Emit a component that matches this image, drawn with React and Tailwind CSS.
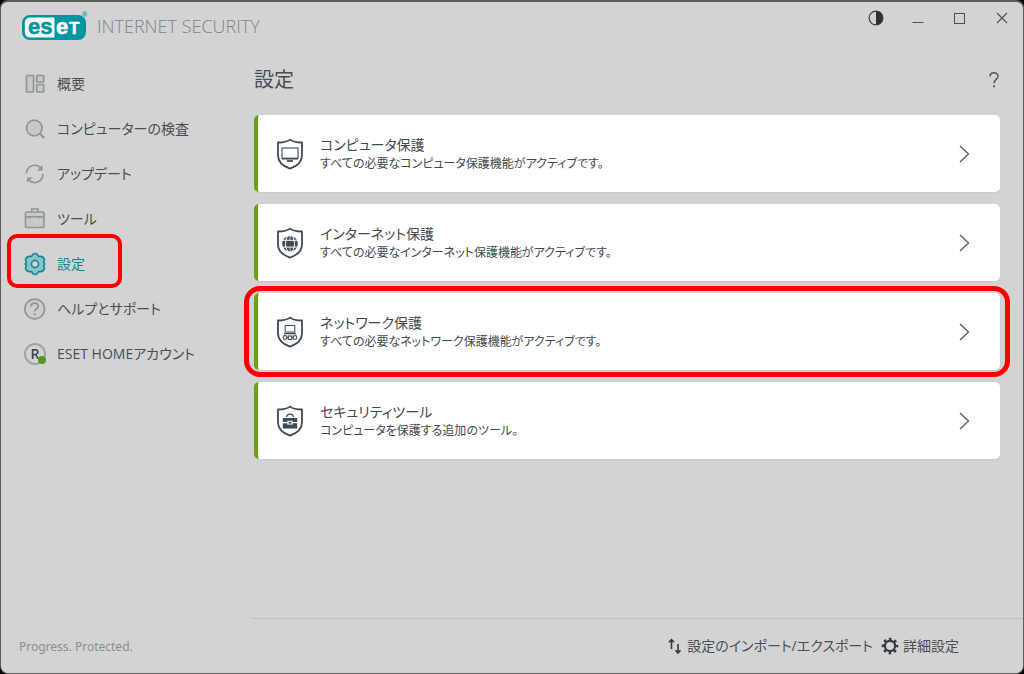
const NAV_ITEMS = [
  { id: "overview", label: "概要", icon: OverviewIcon },
  { id: "scan", label: "コンピューターの検査", icon: ScanIcon },
  { id: "update", label: "アップデート", icon: UpdateIcon },
  { id: "tools", label: "ツール", icon: ToolsIcon },
  { id: "setup", label: "設定", icon: SetupIcon, active: true, marked: true },
  { id: "help", label: "ヘルプとサポート", icon: HelpIcon },
  { id: "home", label: "ESET HOMEアカウント", icon: HomeAccountIcon },
];

const CARDS = [
  {
    id: "computer",
    title: "コンピュータ保護",
    text: "すべての必要なコンピュータ保護機能がアクティブです。",
    glyph: MonitorGlyph,
  },
  {
    id: "internet",
    title: "インターネット保護",
    text: "すべての必要なインターネット保護機能がアクティブです。",
    glyph: GlobeGlyph,
  },
  {
    id: "network",
    title: "ネットワーク保護",
    text: "すべての必要なネットワーク保護機能がアクティブです。",
    glyph: NetworkGlyph,
    marked: true,
  },
  {
    id: "security-tools",
    title: "セキュリティツール",
    text: "コンピュータを保護する追加のツール。",
    glyph: ToolboxGlyph,
  },
];

/* ---------- sidebar icons ---------- */

function OverviewIcon() {
  return (
    <svg width="24" height="24" viewBox="0 0 24 24" fill="#c6c9ca" stroke="#909596" strokeWidth="1.7">
      <rect x="3.5" y="3.5" width="7" height="16.5" rx="0.5" />
      <rect x="13.7" y="3.5" width="7" height="6.5" rx="0.5" />
      <rect x="13.7" y="12.5" width="7" height="7.5" rx="0.5" />
    </svg>
  );
}

function ScanIcon() {
  return (
    <svg width="24" height="24" viewBox="0 0 24 24" fill="#c6c9ca" stroke="#909596" strokeWidth="1.7">
      <circle cx="11.3" cy="11" r="7.8" />
      <path d="M17 16.7l3.8 3.8" strokeWidth="2" strokeLinecap="round" />
    </svg>
  );
}

function UpdateIcon() {
  return (
    <svg width="24" height="24" viewBox="0 0 24 24" fill="none" stroke="#909596" strokeWidth="1.7">
      <path d="M3.5 11.5a8.3 8.3 0 0 1 14.8-5" />
      <path d="M20 12a8.3 8.3 0 0 1-14.8 5.3" />
      <path d="M19.2 3.7v4.6h-4.6z" fill="#909596" strokeWidth="0.6" />
      <path d="M4.3 20.3v-4.6h4.6z" fill="#909596" strokeWidth="0.6" />
    </svg>
  );
}

function ToolsIcon() {
  return (
    <svg width="24" height="24" viewBox="0 0 24 24" fill="#c6c9ca" stroke="#909596" strokeWidth="1.6">
      <rect x="2.5" y="5" width="18.5" height="15.5" rx="1" />
      <path d="M8.7 5V2h6.2v3" fill="none" />
      <path d="M2.5 9.8h18.5" />
      <path d="M7 9.8v1.4M16.6 9.8v1.4" />
    </svg>
  );
}

function SetupIcon() {
  return (
    <svg width="24" height="24" viewBox="0 0 24 24" fill="#86c6cc" stroke="#148792" strokeWidth="1.6" strokeLinejoin="round">
      <path d="M9.6 2.6Q12 .4 14.4 2.6L15.6 4.5L17.9 4.4Q21.1 4.9 21.5 8.2L20.4 10.3L21.9 12L20.4 13.7L21.5 15.8Q21.1 19.1 17.9 19.6L15.6 19.5L14.4 21.4Q12 23.6 9.6 21.4L8.4 19.5L6.1 19.6Q2.9 19.1 2.5 15.8L3.6 13.7L2.1 12L3.6 10.3L2.5 8.2Q2.9 4.9 6.1 4.4L8.4 4.5Z" />
      <circle cx="12" cy="12" r="3.6" fill="#d3d3d3" />
    </svg>
  );
}

function HelpIcon() {
  return (
    <svg width="24" height="24" viewBox="0 0 24 24" fill="none" stroke="#909596" strokeWidth="1.6">
      <circle cx="11.7" cy="12" r="9.9" fill="#cbcdce" />
      <path d="M8.2 9.6c0-4.6 7-4.4 7-.4 0 2.5-3.5 2.6-3.5 5.2" strokeWidth="1.8" />
      <circle cx="11.7" cy="17.2" r="1.1" fill="#909596" stroke="none" />
    </svg>
  );
}

function HomeAccountIcon() {
  return (
    <span className="relative flex size-[22px] items-center justify-center rounded-full border-2 border-[#a0a4a6] text-sm font-semibold text-[#3a444b]">
      R
      <span className="absolute -right-0.5 -bottom-px size-2 rounded-full bg-[#5c9424]" />
    </span>
  );
}

/* ---------- card icons ---------- */

function Shield({ children }) {
  return (
    <svg className="shrink-0" width="28" height="32" viewBox="0 0 28 32" fill="none" stroke="#3f4b54">
      <path
        d="M14 1.6C11 4 7 4.5 2 4.5V17.5C2 25.5 8 28.5 14 30.6C20 28.5 26 25.5 26 17.5V4.5C21 4.5 17 4 14 1.6Z"
        strokeWidth="1.8"
        strokeLinejoin="round"
      />
      {children}
    </svg>
  );
}

function MonitorGlyph() {
  return (
    <>
      <rect x="6" y="10" width="16" height="10.5" strokeWidth="1.1" />
      <path d="M6 20.6h16" strokeWidth="1.8" />
      <path d="M11 23h6" strokeWidth="1.8" />
    </>
  );
}

function GlobeGlyph() {
  return (
    <>
      <circle cx="14" cy="16.7" r="7.8" fill="#3f4b54" stroke="none" />
      <g stroke="#fff" strokeWidth="1">
        <path d="M6 13.3h16M6 20.1h16" />
        <ellipse cx="14" cy="16.7" rx="4.5" ry="8.6" />
        <path d="M14 9v4.3M14 20.1v4.5" strokeWidth="0.7" />
      </g>
    </>
  );
}

function NetworkGlyph() {
  return (
    <>
      <rect x="9.2" y="9.5" width="9.6" height="6.5" strokeWidth="1" />
      <path d="M8 17.6h12" strokeWidth="1.4" />
      <path d="M9 21.5h10" strokeWidth="1" />
      <g strokeWidth="1.1" fill="#fff">
        <circle cx="9" cy="21.5" r="1.9" />
        <rect x="12.2" y="20" width="3.6" height="3.4" />
        <circle cx="19" cy="21.5" r="1.9" />
      </g>
    </>
  );
}

function ToolboxGlyph() {
  return (
    <>
      <path d="M10.5 12.2c.4-4.2 6.6-4.2 7 0" strokeWidth="1.2" />
      <path d="M6.8 13h14.4v4H6.8zM6.8 18.3h14.4v5.2H6.8z" fill="#3f4b54" stroke="none" />
      <rect x="11.2" y="15.8" width="5.6" height="3.8" fill="#fff" stroke="none" />
      <rect x="12.6" y="16.8" width="2.8" height="1.8" fill="#3f4b54" stroke="none" />
    </>
  );
}

/* ---------- shared bits ---------- */

function EsetLogo() {
  return (
    <svg width="68" height="30" viewBox="0 0 68 30" role="img" aria-label="ESET">
      <rect x="1" y="4" width="64" height="25" rx="8" fill="#0096a1" />
      <path d="M33.5 6.5H9.5Q3.8 6.5 3.8 12V21Q3.8 26.5 9.5 26.5H33.5Z" fill="#f4f8f8" />
      <g fontFamily="Liberation Sans, sans-serif" fontWeight="700" strokeWidth="0.5">
        <text x="7" y="22.5" fontSize="22" fill="#0096a1" stroke="#0096a1">es</text>
        <text x="35" y="22.5" fontSize="22" fill="#fff" stroke="#fff">e</text>
        <text x="48" y="22.5" fontSize="17" fill="#fff" stroke="#fff">T</text>
        <text x="61" y="6" fontSize="7" fill="#0096a1">®</text>
      </g>
    </svg>
  );
}

function TitleBar() {
  return (
    <header className="flex items-start justify-between pl-5 pr-[13px]">
      <div className="flex items-center gap-2 pt-2">
        <EsetLogo />
        <span className="font-['Open_Sans',sans-serif] text-lg leading-8 font-light text-[#7b858b]">
          INTERNET SECURITY
        </span>
      </div>
      <div className="flex items-center gap-[26px] pt-2 text-[#4a5054]">
        <button type="button" aria-label="テーマ" className="size-4">
          <svg width="16" height="16" viewBox="0 0 16 16">
            <circle cx="8" cy="8" r="6.9" fill="none" stroke="#3c4145" strokeWidth="1.2" />
            <path d="M8 1a7 7 0 0 1 0 14z" fill="#2f3336" />
          </svg>
        </button>
        <button type="button" aria-label="最小化" className="size-4">
          <svg width="16" height="16" viewBox="0 0 16 16" stroke="currentColor">
            <path d="M2.5 12.5h11" />
          </svg>
        </button>
        <button type="button" aria-label="最大化" className="size-4">
          <svg width="16" height="16" viewBox="0 0 16 16" fill="none" stroke="currentColor">
            <rect x="2.5" y="3.5" width="10" height="10" />
          </svg>
        </button>
        <button type="button" aria-label="閉じる" className="size-4">
          <svg width="16" height="16" viewBox="0 0 16 16" stroke="currentColor" strokeWidth="1.1">
            <path d="M3 3l10 10M13 3L3 13" />
          </svg>
        </button>
      </div>
    </header>
  );
}

function Sidebar() {
  return (
    <aside className="flex w-[250px] shrink-0 flex-col justify-between">
      <nav className="flex flex-col items-start pt-[19px]">
        {NAV_ITEMS.map(({ id, label, icon: Icon, active, marked }) => (
          <a
            key={id}
            href={`#${id}`}
            aria-current={active ? "page" : undefined}
            className={`relative flex h-[45px] items-center gap-2.5 pl-[22px] pr-9 text-sm ${
              active ? "text-[#148792]" : "text-[#474f55]"
            }`}
          >
            <span className="flex w-6 justify-center">
              <Icon />
            </span>
            {label}
            {marked && (
              <span className="pointer-events-none absolute -top-[7px] -right-px -bottom-0.5 left-1.5 rounded-[10px] border-4 border-[#ff0000]" />
            )}
          </a>
        ))}
      </nav>
      <p className="pb-4 pl-[18px] font-['Noto_Sans',sans-serif] text-xs leading-5 text-[#868f94]">
        Progress. Protected.
      </p>
    </aside>
  );
}

function ProtectionCard({ title, text, glyph: Glyph, marked }) {
  return (
    <li className="relative">
      <button
        type="button"
        className="flex h-[77px] w-full items-center gap-4 rounded-[5px] border-l-4 border-[#68a317] bg-white pl-[18px] pr-7 text-left shadow-xs"
      >
        <Shield>
          <Glyph />
        </Shield>
        <span className="min-w-0 flex-1 text-[#41494f]">
          <span className="block text-sm leading-5">{title}</span>
          <span className="block text-xs leading-[18px]">{text}</span>
        </span>
        <svg width="16" height="20" viewBox="0 0 16 20" fill="none" stroke="#59636b" strokeWidth="1.4">
          <path d="M4 2l8.5 8L4 18" />
        </svg>
      </button>
      {marked && (
        <span className="pointer-events-none absolute -inset-x-2.5 -inset-y-[7px] rounded-2xl border-5 border-[#ff0000]" />
      )}
    </li>
  );
}

function FooterActions() {
  return (
    <footer className="flex h-[55px] items-center justify-end gap-2 border-t border-[#bfc0c1] pr-16 text-sm text-[#474f55]">
      <button type="button" className="flex items-center gap-1">
        <svg width="16" height="18" viewBox="0 0 16 18" fill="none" stroke="#2f3a42" strokeWidth="1.6">
          <path d="M4.5 12V3M2 5.3L4.5 2.6 7 5.3" />
          <path d="M11 7v8.6M8.5 13.3l2.5 2.7 2.5-2.7" />
        </svg>
        設定のインポート/エクスポート
      </button>
      <button type="button" className="flex items-center gap-1">
        <svg width="18" height="18" viewBox="0 0 18 18" fill="none" stroke="#2f3a42">
          <circle cx="9" cy="9" r="5.1" strokeWidth="2.2" />
          <circle cx="9" cy="9" r="7.1" strokeWidth="2.4" strokeDasharray="2.6 2.976" strokeDashoffset="1.3" />
        </svg>
        詳細設定
      </button>
    </footer>
  );
}

export default function App() {
  return (
    <div className="min-h-screen bg-black font-['Open_Sans','Noto_Sans_CJK_JP',sans-serif] [font-feature-settings:'palt']">
      <div className="flex min-h-screen flex-col rounded-lg border border-t-2 border-[#5d5d5f] bg-[#d3d3d3]">
        <TitleBar />
        <div className="flex flex-1">
          <Sidebar />
          <div className="flex min-w-0 flex-1 flex-col">
            <main className="flex-1 pt-6 pl-[3px] pr-[23px]">
              <div className="flex items-center justify-between">
                <h1 className="text-xl leading-7 text-[#474f55]">設定</h1>
                <button type="button" aria-label="ヘルプ" className="-mr-1 flex size-5 items-center justify-center">
                  <svg width="12" height="18" viewBox="0 0 12 18" fill="none" stroke="#4d5860" strokeWidth="1.5">
                    <path d="M2 5.6C2 .6 10 .6 10 5.2c0 3-4 3.4-4 7" />
                    <circle cx="6" cy="15.3" r="1.1" fill="#4d5860" stroke="none" />
                  </svg>
                </button>
              </div>
              <ul className="mt-[21px] flex flex-col gap-3">
                {CARDS.map((card) => (
                  <ProtectionCard key={card.id} {...card} />
                ))}
              </ul>
            </main>
            <FooterActions />
          </div>
        </div>
      </div>
    </div>
  );
}
